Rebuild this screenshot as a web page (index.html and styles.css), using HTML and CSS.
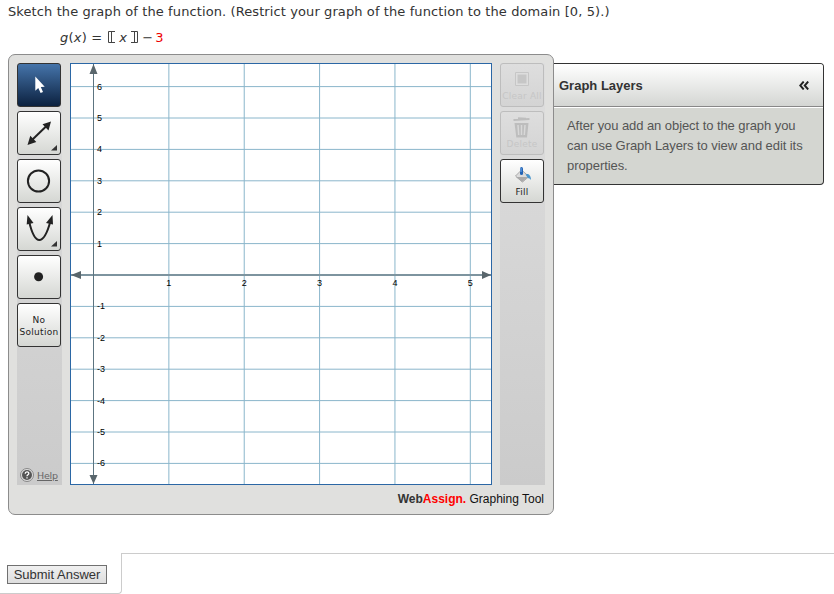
FILE: index.html
```html
<!DOCTYPE html>
<html lang="en">
<head>
    <meta charset="UTF-8">
    <meta name="viewport" content="width=device-width, initial-scale=1.0">
    <title>Graphing Tool</title>
    <link rel="stylesheet" href="styles.css">
</head>
<body>
    <p class="question">Sketch the graph of the function. (Restrict your graph of the function to the domain [0, 5).)</p>
    <p class="formula"><span><i>g</i>(<i>x</i>) =</span><svg class="bracket" width="7" height="12" viewBox="0 0 7 12"><path d="M7 .5H.5v11H7M3.500 .5v11"/></svg><i class="arg">x</i><svg class="bracket" width="7" height="12" viewBox="0 0 7 12"><path d="M0 .5h6.500v11H0M3.500 .5v11"/></svg><span class="minus">−</span><span class="value">3</span></p>

    <div class="workspace">
        <div class="tool">
            <div class="tool-main">
                <!-- Drawing tools -->
                <div class="toolbar">
                    <button class="btn active">
                        <svg width="42" height="42" viewBox="0 0 42 42"><path d="M17.300 12.500v14.300l3-2.800 2.300 5 2.400-1.100-2.200-4.800 3.900-.3z" fill="#fff"/></svg>
                    </button>
                    <button class="btn">
                        <svg width="42" height="42" viewBox="0 0 42 42">
                            <path d="M14 28L29 13.500" stroke="#222" stroke-width="2"/>
                            <path d="M33 9.500l-2.500 9-6-6.200zM9.500 33l2.800-9.300 6 6.200z" fill="#222"/>
                            <path d="M39 33v5.500h-6z" fill="#333"/>
                        </svg>
                    </button>
                    <button class="btn">
                        <svg width="42" height="42" viewBox="0 0 42 42"><circle cx="20.500" cy="21" r="10.600" fill="none" stroke="#222" stroke-width="2"/></svg>
                    </button>
                    <button class="btn">
                        <svg width="42" height="42" viewBox="0 0 42 42">
                            <path d="M11 13C14 26 17.500 32 21.300 32S29 26 32.500 13" fill="none" stroke="#222" stroke-width="2"/>
                            <path d="M9.500 7l6 8-6.800 1.500zM34.500 7l.5 9.500-7-1.500z" fill="#222"/>
                            <path d="M39 33v5.500h-6z" fill="#333"/>
                        </svg>
                    </button>
                    <button class="btn">
                        <svg width="42" height="42" viewBox="0 0 42 42"><circle cx="20.600" cy="20.700" r="4.500" fill="#222"/></svg>
                    </button>
                    <button class="btn text-btn">No<br>Solution</button>
                    <div class="help">
                        <svg width="14" height="14" viewBox="0 0 14 14">
                            <circle cx="7" cy="7" r="6.500" fill="#ddd" stroke="#888"/>
                            <circle cx="7" cy="7" r="5" fill="#555"/>
                            <path d="M5.200 5.800c0-2.500 3.600-2.400 3.600-.4C8.800 6.800 7 6.800 7 8.300M7 9.200v1.300" fill="none" stroke="#fff" stroke-width="1.300"/>
                        </svg>
                        <a>Help</a>
                    </div>
                </div>

                <!-- Graph -->
                <svg class="graph" id="graph" width="422" height="422" viewBox="0 0 420 420"></svg>

                <!-- Actions -->
                <div class="toolbar">
                    <button class="btn disabled">
                        <svg width="42" height="42" viewBox="0 0 42 42"><path d="M14.500 8.500h13v13h-13z" fill="#ddd" stroke="#c6c6c6"/><path d="M16.500 10.500h9v9h-9z" fill="#c6c6c6"/></svg>
                        <span>Clear All</span>
                    </button>
                    <button class="btn disabled">
                        <svg width="42" height="42" viewBox="0 0 42 42">
                            <path d="M12.500 8l16-1M17 6.200l8 .6" stroke="#bdbdbd" stroke-width="2"/>
                            <path d="M13.500 11h14l-1.500 14.500H15.300z" fill="#bdbdbd"/>
                            <path d="M17 13l.7 10M20.500 13v10M24 13l-.7 10" stroke="#d8d8d8" stroke-width="1.500"/>
                        </svg>
                        <span>Delete</span>
                    </button>
                    <button class="btn">
                        <svg width="42" height="42" viewBox="0 0 42 42">
                            <path d="M14.500 16l6-6 7.500 6.500-6.500 5.500z" fill="#dcdcdc" stroke="#aaa"/>
                            <path d="M15 17h12l-6 5z" fill="#aaa"/>
                            <path d="M24.500 14.500c2-1.500 5.500 0 5.500 5.500-1-1.500-2-2-3-1.800z" fill="#4b96cd"/>
                            <path d="M20.500 8.500v5" stroke="#2263b5" stroke-width="3" stroke-linecap="round"/>
                            <path d="M20 8v4" stroke="#79b0ec"/>
                        </svg>
                        <span>Fill</span>
                    </button>
                </div>
            </div>
            <div class="brand"><b>Web<em>Assign.</em></b> Graphing Tool</div>
        </div>

        <div class="layers">
            <div class="layers-head">
                <h2>Graph Layers</h2>
                <svg width="10" height="9" viewBox="0 0 10 9"><path d="M4.700 .5L1.200 4.500l3.500 4M9.200 .5L5.700 4.500l3.500 4" fill="none" stroke="#222" stroke-width="1.900"/></svg>
            </div>
            <p>After you add an object to the graph you can use Graph Layers to view and edit its properties.</p>
        </div>
    </div>

    <div class="footer">
        <div class="submit-tab"><button class="submit">Submit Answer</button></div>
        <div class="rule"></div>
    </div>

    <script src="graph.js"></script>
</body>
</html>
```
FILE: styles.css
```css
* {
    margin: 0;
    padding: 0;
    box-sizing: border-box;
}

body {
    height: 594px;
    overflow: hidden;
    background: #fff;
    color: #333;
    font-family: Verdana, "DejaVu Sans", sans-serif;
    font-size: 13px;
}

svg {
    display: block;
}

.question {
    padding: 4px 0 0 8px;
    line-height: 16px;
    letter-spacing: 0.1px;
    white-space: nowrap;
}

.formula {
    display: flex;
    align-items: center;
    height: 16px;
    margin: 9px 0 9px 60px;
    letter-spacing: 0.2px;
}

.bracket {
    flex: none;
    margin-left: 6px;
    fill: none;
    stroke: #444;
}

.arg {
    width: 12px;
    margin-left: 4px;
}

.arg + .bracket {
    margin-left: 0;
}

.minus {
    width: 12px;
    margin-left: 4px;
}

.value {
    margin-left: 1px;
    color: #e00;
}

.workspace {
    display: flex;
    align-items: flex-start;
}

/* Graphing tool */
.tool {
    width: 546px;
    height: 461px;
    margin-left: 8px;
    padding: 8px;
    border: 1px solid #8c8c8c;
    border-radius: 7px;
    background: #e0e0de;
}

.tool-main {
    display: flex;
    gap: 8px;
}

.toolbar {
    display: flex;
    flex-direction: column;
    gap: 4px;
    width: 45px;
    height: 422px;
    background: linear-gradient(#dedede, #cbcbcb);
}

.btn {
    display: flex;
    flex-direction: column;
    align-items: center;
    flex: none;
    width: 44px;
    height: 44px;
    border: 1px solid #333;
    border-radius: 3px;
    background: linear-gradient(#fff, #d5d7d3);
    color: #222;
    font-family: Verdana, "DejaVu Sans", sans-serif;
    font-size: 9px;
    white-space: nowrap;
}

.btn svg {
    flex: none;
}

.btn span {
    height: 12px;
    margin-top: -16px;
    line-height: 12px;
    letter-spacing: 0.2px;
}

.btn.active {
    background: linear-gradient(#4574aa, #0c213f);
}

.btn.disabled {
    border-color: #bdbdbd;
    background: linear-gradient(#dedede, #d4d4d4);
    color: #c6c6c6;
}

.text-btn {
    justify-content: center;
    padding-top: 2px;
    line-height: 12px;
    letter-spacing: 0.3px;
}

.help {
    display: flex;
    align-items: center;
    gap: 3px;
    margin: auto 0 3px 3px;
    color: #666;
    font-size: 9.5px;
    letter-spacing: -0.2px;
    text-decoration: underline;
}

.graph {
    border: 1px solid #2b67a5;
    background: #fff;
    font-family: Arial, "Liberation Sans", sans-serif;
    font-size: 9px;
}

.grid {
    stroke: #8ab6cb;
}

.axis {
    stroke: #5c7480;
}

.axis-x {
    stroke: #7d949f;
    stroke-width: 2;
}

.arrow {
    fill: #59666c;
}

.brand {
    margin-top: 7px;
    padding-right: 1px;
    color: #111;
    font: 12px/14px Arial, "Liberation Sans", sans-serif;
    text-align: right;
}

.brand b {
    color: #333;
}

.brand em {
    color: #f00;
    font-style: normal;
}

/* Graph layers */
.layers {
    width: 270px;
    height: 122px;
    margin-top: 9px;
    border: 1px solid #333;
    border-left: 0;
    border-radius: 0 4px 4px 0;
    background: #d4d6d1;
    font-family: Arial, "Liberation Sans", sans-serif;
    overflow: hidden;
}

.layers-head {
    display: flex;
    align-items: center;
    justify-content: space-between;
    height: 43px;
    padding: 0 14px 0 5px;
    border-bottom: 1px solid #888;
    background: linear-gradient(#fff, #d4d6d3);
    box-shadow: 0 1px #fff;
}

.layers h2 {
    font-size: 13px;
}

.layers p {
    padding: 9px 10px 0 13px;
    color: #555;
    font-size: 13px;
    line-height: 20px;
    letter-spacing: -0.07px;
}

/* Submit area */
.footer {
    display: flex;
    margin-top: 38px;
}

.submit-tab {
    width: 122px;
    height: 41px;
    padding: 12px 0 0 7px;
    border: 1px solid #ccc;
    border-top: 0;
    border-left: 0;
    border-radius: 0 0 4px 0;
}

.submit {
    width: 100px;
    height: 19px;
    border: 1px solid #707070;
    background: linear-gradient(#f0f0f0, #dedede);
    color: #333;
    font: 13px/16px Arial, "Liberation Sans", sans-serif;
    white-space: nowrap;
}

.rule {
    flex: 1;
    height: 1px;
    background: #ccc;
}
```
FILE: graph.js
```js
const graph = document.getElementById('graph');
const originX = 22.5;
const originY = 211;
const stepX = 75.36;
const stepY = 31.4;
let lines = '';
let labels = '';

for (let n = 1; n <= 5; n++) {
    const x = originX + n * stepX;
    lines += `<path class="grid" d="M${x} 0V420"/>`;
    labels += `<text x="${x}" y="222" text-anchor="middle">${n}</text>`;
}

for (let n = -6; n <= 6; n++) {
    if (n === 0) continue;
    const y = originY - n * stepY;
    lines += `<path class="grid" d="M0 ${y}H420"/>`;
    labels += `<text x="26" y="${y + 3}">${n}</text>`;
}

// axes with arrowheads
lines += `<path class="axis-x" d="M0 ${originY}H420"/>`;
lines += `<path class="axis" d="M${originX} 0V420"/>`;
lines += '<path class="arrow" d="M22.500 0l4 10h-8zM22.500 420l4-9h-8zM0 211l10-4v8zM420 211l-9-4v8z"/>';

graph.innerHTML = lines + labels;
```
